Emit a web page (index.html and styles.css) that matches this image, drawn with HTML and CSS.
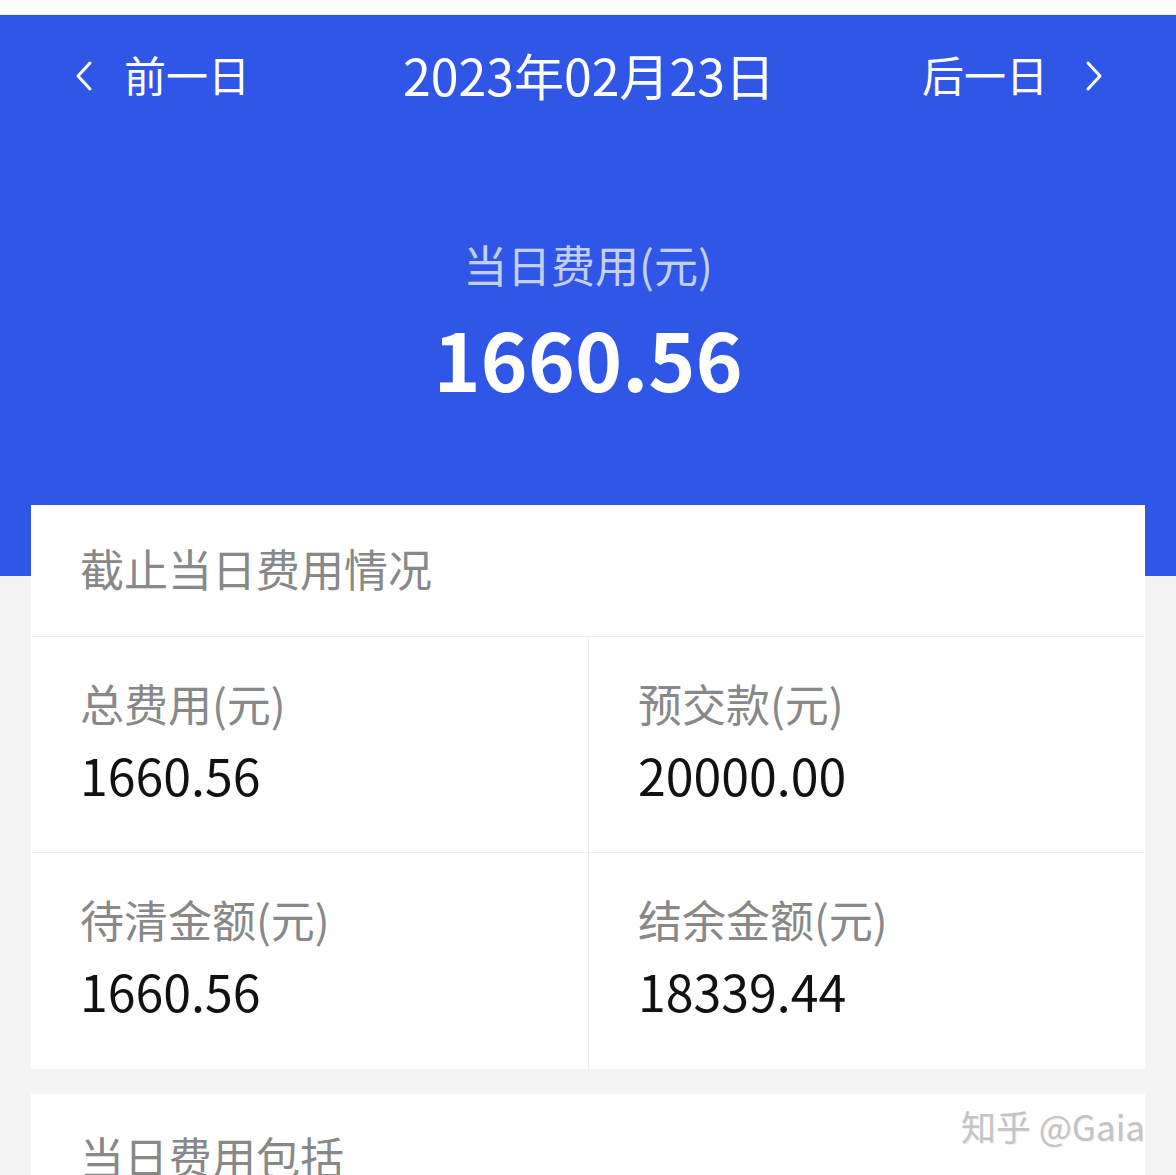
FILE: index.html
```html
<!DOCTYPE html>
<html lang="zh-CN">
<head>
    <meta charset="UTF-8">
    <meta name="viewport" content="width=device-width, initial-scale=1.0">
    <title>当日费用</title>
    <link rel="stylesheet" href="styles.css">
</head>
<body>

    <div class="status-strip"></div>

    <div class="hero">
        <div class="day-nav">
            <a class="nav-btn" href="#">
                <svg class="chevron" width="18" height="32" viewBox="0 0 18 32"><polyline points="15,3 3,16 15,29" /></svg>
                <span>前一日</span>
            </a>
            <div class="current-date">2023年02月23日</div>
            <a class="nav-btn nav-next" href="#">
                <span>后一日</span>
                <svg class="chevron" width="18" height="32" viewBox="0 0 18 32"><polyline points="3,3 15,16 3,29" /></svg>
            </a>
        </div>

        <div class="day-summary">
            <div class="summary-label">当日费用(元)</div>
            <div class="summary-amount">1660.56</div>
        </div>
    </div>

    <div class="card">
        <div class="card-title">截止当日费用情况</div>
        <div class="stat-grid">
            <div class="stat">
                <div class="stat-label">总费用(元)</div>
                <div class="stat-value">1660.56</div>
            </div>
            <div class="stat">
                <div class="stat-label">预交款(元)</div>
                <div class="stat-value">20000.00</div>
            </div>
            <div class="stat">
                <div class="stat-label">待清金额(元)</div>
                <div class="stat-value">1660.56</div>
            </div>
            <div class="stat">
                <div class="stat-label">结余金额(元)</div>
                <div class="stat-value">18339.44</div>
            </div>
        </div>
    </div>

    <div class="card card-second">
        <div class="card-title">当日费用包括</div>
        <div class="watermark">知乎 @Gaia</div>
    </div>

</body>
</html>
```

FILE: styles.css
```css
body {
    font-family: "Noto Sans CJK SC", "Noto Sans", sans-serif;
    background-color: #f4f4f5;
    margin: 0;
    padding: 0;
    height: 1175px;
    overflow: hidden;
}

.status-strip {
    height: 14px;
    background-color: #fff;
    border-bottom: 1px solid #e4e8f0;
}

.hero {
    background-color: #3056e8;
    color: #fff;
    padding-bottom: 173px;
}

.day-nav {
    height: 124px;
    box-sizing: border-box;
    display: flex;
    align-items: center;
    justify-content: space-between;
    padding: 0 73px 6px 75px;
}

.nav-btn {
    display: flex;
    align-items: center;
    gap: 31px;
    color: #fff;
    text-decoration: none;
    font-size: 42px;
    line-height: 56px;
}

.nav-next {
    gap: 37px;
}

.chevron {
    margin-top: 4px;
}

.chevron polyline {
    fill: none;
    stroke: #fff;
    stroke-width: 3;
    stroke-linecap: round;
    stroke-linejoin: round;
}

.current-date {
    font-size: 50px;
    line-height: 60px;
    margin-left: 6px;
}

.day-summary {
    margin-top: 96px;
    text-align: center;
}

.summary-label {
    font-size: 44px;
    line-height: 58px;
    color: rgba(255, 255, 255, 0.72);
}

.summary-amount {
    margin-top: 18px;
    font-size: 80px;
    line-height: 92px;
    font-weight: 700;
}

.card {
    position: relative;
    background-color: #fff;
    margin: -71px 31px 0 31px;
}

.card-title {
    height: 132px;
    display: flex;
    align-items: center;
    padding: 0 0 6px 49px;
    font-size: 44px;
    color: #888;
    border-bottom: 1px solid #ededed;
    box-sizing: border-box;
}

.stat-grid {
    display: grid;
    grid-template-columns: 558px 1fr;
}

.stat {
    height: 216px;
    box-sizing: border-box;
    padding: 37px 0 0 49px;
}

.stat:nth-child(odd) {
    border-right: 1px solid #ededed;
}

.stat:nth-child(-n+2) {
    border-bottom: 1px solid #ededed;
}

.stat-label {
    font-size: 44px;
    line-height: 58px;
    color: #888;
}

.stat-value {
    margin-top: 10px;
    font-size: 50px;
    line-height: 64px;
    color: #111;
}

.card-second {
    margin-top: 25px;
    height: 200px;
}

.card-second .card-title {
    height: auto;
    padding: 33px 0 0 49px;
    line-height: 58px;
    border-bottom: none;
}

.watermark {
    position: absolute;
    right: 0;
    top: 10px;
    font-size: 35px;
    line-height: 44px;
    color: #c4c4c4;
    text-shadow: 1px 1px 0 #eee;
}
```
